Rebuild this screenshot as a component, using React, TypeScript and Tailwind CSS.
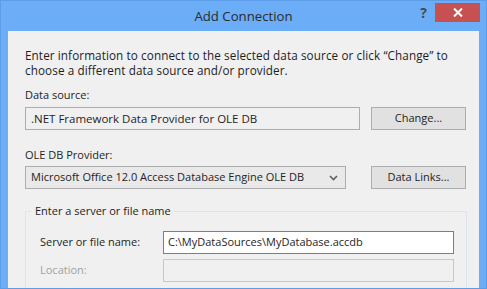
const font = { fontFamily: '"Open Sans", "Noto Sans", sans-serif' };

const Button = ({ label }: { label: string }) => (
  <div className="w-[95px] h-[23px] border border-[#adadad] bg-[#e1e1e1] flex items-center justify-center text-[#1e1e1e]">
    {label}
  </div>
);

const AddConnection = () => {
  return (
    <div
      className="w-[487px] h-[289px] bg-[#6badf6] border border-[#5d9de8] flex flex-col overflow-hidden text-[11px] text-[#1e1e1e]"
      style={font}
    >
      <div className="h-[30px] grid grid-cols-[1fr_auto_1fr] shrink-0">
        <div />
        <div className="pt-[6px] text-[13.2px] text-[#2b2b2b] leading-[18px]">Add Connection</div>
        <div className="flex justify-end items-start pr-[6px]">
          <span className="mt-[3px] mr-[8px] text-[14px] font-bold text-[#4a4a4a] leading-[18px]">?</span>
          <div className="mt-[2px] w-[45px] h-[19px] bg-[#c75050] flex items-center justify-center">
            <svg width="10" height="9" viewBox="0 0 10 9">
              <path d="M1 0.5 L9 8.5 M9 0.5 L1 8.5" stroke="#fff" strokeWidth="2" />
            </svg>
          </div>
        </div>
      </div>

      <div className="mx-[7px] flex-1 bg-[#f0f0f0] pl-[17px] pr-[13px] pt-[17px] overflow-hidden">
        <p className="leading-[15px] text-[11.7px] tracking-[0.1px]">
          Enter information to connect to the selected data source or click “Change” to
          <br />
          choose a different data source and/or provider.
        </p>

        <div className="mt-[10px] leading-[14px]">Data source:</div>
        <div className="mt-[5px] flex items-center justify-between">
          <div className="w-[335px] h-[23px] border border-[#adadad] bg-[#f0f0f0] flex items-center px-[5px] text-[11.5px]">
            .NET Framework Data Provider for OLE DB
          </div>
          <Button label="Change..." />
        </div>

        <div className="mt-[18px] leading-[14px]">OLE DB Provider:</div>
        <div className="mt-[4px] flex items-center justify-between">
          <div className="w-[321px] h-[23px] border border-[#adadad] bg-[#e9e9e9] flex items-center justify-between pl-[5px] pr-[7px]">
            <span>Microsoft Office 12.0 Access Database Engine OLE DB</span>
            <svg width="9" height="6" viewBox="0 0 9 6">
              <path d="M1 1 L4.5 4.5 L8 1" stroke="#606060" strokeWidth="1.6" fill="none" />
            </svg>
          </div>
          <Button label="Data Links..." />
        </div>

        <fieldset className="mt-[15px] w-[442px] border border-[#dfe5ec] pl-[6px] pr-[12px] pb-[10px]">
          <legend className="px-[3px] leading-[14px]">Enter a server or file name</legend>
          <div className="mt-[13px] flex items-center justify-between pl-[8px]">
            <span>Server or file name:</span>
            <div className="w-[291px] h-[23px] border border-[#3c8ed8] bg-white flex items-center px-[4px]">
              C:\MyDataSources\MyDatabase.accdb
            </div>
          </div>
          <div className="mt-[5px] flex items-center justify-between pl-[8px]">
            <span className="text-[#a0a0a0]">Location:</span>
            <div className="w-[291px] h-[23px] border border-[#c8c8c8] bg-[#f0f0f0]" />
          </div>
        </fieldset>
      </div>
    </div>
  );
};

export default AddConnection;
